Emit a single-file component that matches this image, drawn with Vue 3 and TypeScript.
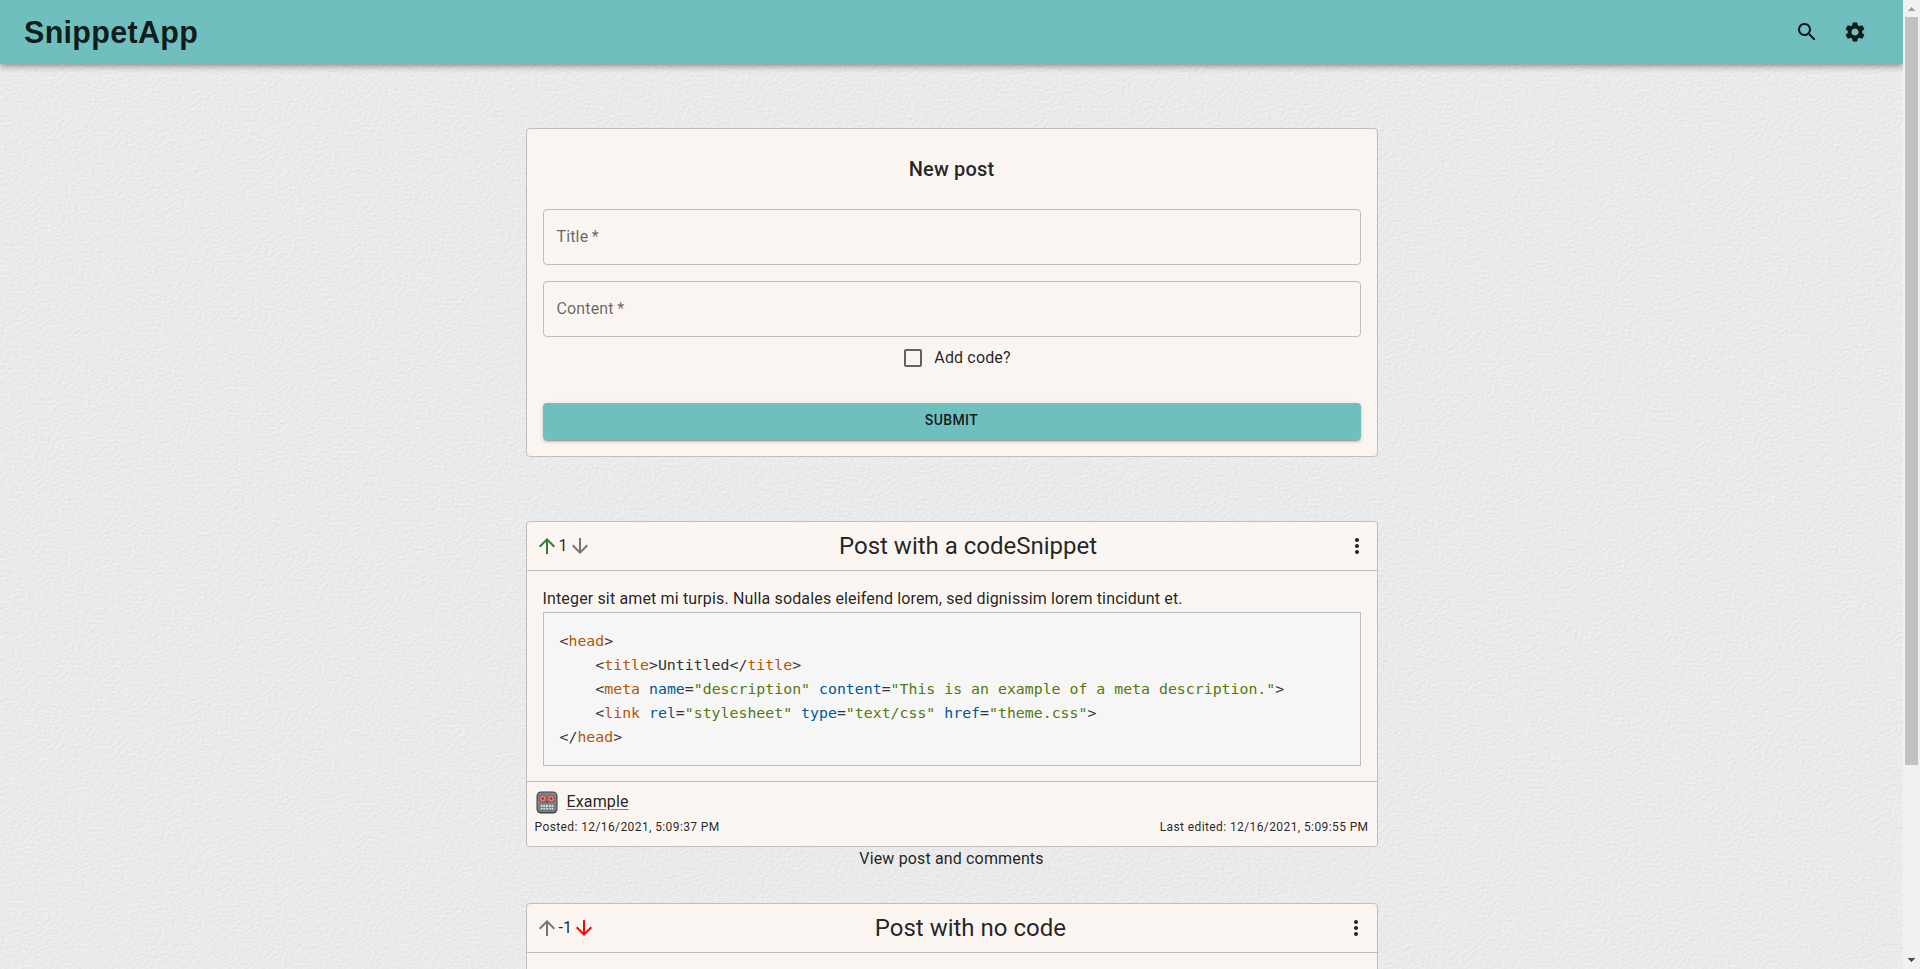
<script setup lang="ts">
interface Token {
  kind: 'plain' | 'tag' | 'attr' | 'str'
  text: string
}

interface Post {
  id: number
  votes: number
  title: string
  body?: string
  code?: Token[][]
  author?: string
  posted?: string
  edited?: string
}

const p = (text: string): Token => ({ kind: 'plain', text })
const t = (text: string): Token => ({ kind: 'tag', text })
const a = (text: string): Token => ({ kind: 'attr', text })
const s = (text: string): Token => ({ kind: 'str', text })

const fields: string[] = ['Title', 'Content']

const posts: Post[] = [
  {
    id: 1,
    votes: 1,
    title: 'Post with a codeSnippet',
    body: 'Integer sit amet mi turpis. Nulla sodales eleifend lorem, sed dignissim lorem tincidunt et.',
    code: [
      [p('<'), t('head'), p('>')],
      [p('    <'), t('title'), p('>Untitled</'), t('title'), p('>')],
      [p('    <'), t('meta'), p(' '), a('name'), p('='), s('"description"'), p(' '), a('content'), p('='), s('"This is an example of a meta description."'), p('>')],
      [p('    <'), t('link'), p(' '), a('rel'), p('='), s('"stylesheet"'), p(' '), a('type'), p('='), s('"text/css"'), p(' '), a('href'), p('='), s('"theme.css"'), p('>')],
      [p('</'), t('head'), p('>')],
    ],
    author: 'Example',
    posted: '12/16/2021, 5:09:37 PM',
    edited: '12/16/2021, 5:09:55 PM',
  },
  { id: 2, votes: -1, title: 'Post with no code' },
]
</script>

<template>
  <div class="window">
    <div class="viewport">
      <svg class="paper" aria-hidden="true">
        <filter id="grain" x="0" y="0" width="100%" height="100%" color-interpolation-filters="sRGB">
          <feTurbulence type="fractalNoise" baseFrequency="0.3 0.42" numOctaves="3" seed="4" result="noise" />
          <feDiffuseLighting in="noise" lighting-color="#ffffff" surfaceScale="0.14" diffuseConstant="1.06">
            <feDistantLight azimuth="235" elevation="60" />
          </feDiffuseLighting>
        </filter>
        <rect width="100%" height="100%" filter="url(#grain)" />
      </svg>

      <header class="bar">
        <h1 class="brand">SnippetApp</h1>
        <nav class="actions">
          <svg class="icon" viewBox="0 0 24 24"><path d="M15.5 14h-.79l-.28-.27C15.41 12.59 16 11.11 16 9.5 16 5.91 13.09 3 9.5 3S3 5.91 3 9.5 5.91 16 9.5 16c1.61 0 3.09-.59 4.23-1.57l.27.28v.79l5 4.99L20.49 19l-4.99-5zm-6 0C7.01 14 5 11.99 5 9.5S7.01 5 9.5 5 14 7.01 14 9.5 11.99 14 9.5 14z" /></svg>
          <svg class="icon" viewBox="0 0 24 24"><path d="M19.14 12.94c.04-.3.06-.61.06-.94 0-.32-.02-.64-.07-.94l2.03-1.58c.18-.14.23-.41.12-.61l-1.92-3.32c-.12-.22-.37-.29-.59-.22l-2.39.96c-.5-.38-1.03-.7-1.62-.94l-.36-2.54c-.04-.24-.24-.41-.48-.41h-3.84c-.24 0-.43.17-.47.41l-.36 2.54c-.59.24-1.13.57-1.62.94l-2.39-.96c-.22-.08-.47 0-.59.22L2.74 8.87c-.12.21-.08.47.12.61l2.03 1.58c-.05.3-.09.63-.09.94s.02.64.07.94l-2.03 1.58c-.18.14-.23.41-.12.61l1.92 3.32c.12.22.37.29.59.22l2.39-.96c.5.38 1.03.7 1.62.94l.36 2.54c.05.24.24.41.48.41h3.84c.24 0 .44-.17.47-.41l.36-2.54c.59-.24 1.13-.56 1.62-.94l2.39.96c.22.08.47 0 .59-.22l1.92-3.32c.12-.22.07-.47-.12-.61l-2.01-1.58zM12 15.6c-1.98 0-3.6-1.62-3.6-3.6s1.62-3.6 3.6-3.6 3.6 1.62 3.6 3.6-1.62 3.6-3.6 3.6z" /></svg>
        </nav>
      </header>

      <main class="container">
        <form class="card form">
          <h2 class="form-title">New post</h2>
          <div v-for="f in fields" :key="f" class="field">{{ f }}&#8201;*</div>
          <label class="check">
            <span class="box-wrap">
              <svg class="icon" viewBox="0 0 24 24"><path d="M19 5v14H5V5h14m0-2H5c-1.1 0-2 .9-2 2v14c0 1.1.9 2 2 2h14c1.1 0 2-.9 2-2V5c0-1.1-.9-2-2-2z" /></svg>
            </span>
            <span>Add code?</span>
          </label>
          <button type="button" class="submit">SUBMIT</button>
        </form>

        <article v-for="post in posts" :key="post.id" class="post">
          <div class="card">
            <div class="post-head">
              <div class="votes">
                <svg class="icon arrow" :class="{ up: post.votes > 0 }" viewBox="0 0 24 24"><path d="m4 12 1.41 1.41L11 7.83V20h2V7.83l5.58 5.59L20 12l-8-8-8 8z" /></svg>
                <span>{{ post.votes }}</span>
                <svg class="icon arrow" :class="{ down: post.votes < 0 }" viewBox="0 0 24 24"><path d="m20 12-1.41-1.41L13 16.17V4h-2v12.17l-5.58-5.59L4 12l8 8 8-8z" /></svg>
              </div>
              <h2 class="post-title">{{ post.title }}</h2>
              <svg class="icon" viewBox="0 0 24 24"><path d="M12 8c1.1 0 2-.9 2-2s-.9-2-2-2-2 .9-2 2 .9 2 2 2zm0 2c-1.1 0-2 .9-2 2s.9 2 2 2 2-.9 2-2-.9-2-2-2zm0 6c-1.1 0-2 .9-2 2s.9 2 2 2 2-.9 2-2-.9-2-2-2z" /></svg>
            </div>
            <div class="post-body">
              <p v-if="post.body" class="text">{{ post.body }}</p>
              <div v-if="post.code" class="code">
                <div v-for="(line, i) in post.code" :key="i" class="line"><span v-for="(tok, j) in line" :key="j" :class="tok.kind">{{ tok.text }}</span></div>
              </div>
            </div>
            <div v-if="post.author" class="post-foot">
              <div class="author">
                <svg class="avatar" viewBox="0 0 22 23">
                  <rect x="0.5" y="0.5" width="21" height="22" rx="4.5" fill="#3e4347" />
                  <rect x="1.6" y="1.4" width="18.8" height="19.6" rx="3.4" fill="#83838f" />
                  <circle cx="6.8" cy="7.6" r="3.9" fill="#4a4a52" />
                  <circle cx="15.2" cy="7.6" r="3.9" fill="#4a4a52" />
                  <circle cx="6.8" cy="7.6" r="3.3" fill="#f07060" />
                  <circle cx="15.2" cy="7.6" r="3.3" fill="#f07060" />
                  <circle cx="6.8" cy="7.6" r="1.1" fill="#5c2f2d" />
                  <circle cx="15.2" cy="7.6" r="1.1" fill="#5c2f2d" />
                  <path d="M11 9.8l1.2 2.2H9.8z" fill="#3e4347" />
                  <rect x="3.8" y="13" width="14.4" height="6.4" rx="1" fill="#4a4d52" />
                  <path d="M4.4 13.6h2.3v2.3H4.4zM7.15 13.6h2.3v2.3h-2.3zM9.9 13.6h2.2v2.3H9.9zM12.6 13.6h2.3v2.3h-2.3zM15.35 13.6h2.3v2.3h-2.3zM4.4 16.5h2.3v2.3H4.4zM7.15 16.5h2.3v2.3h-2.3zM9.9 16.5h2.2v2.3H9.9zM12.6 16.5h2.3v2.3h-2.3zM15.35 16.5h2.3v2.3h-2.3z" fill="#d5d7d6" />
                </svg>
                <a class="name">{{ post.author }}</a>
              </div>
              <div class="dates">
                <span>Posted: {{ post.posted }}</span>
                <span>Last edited: {{ post.edited }}</span>
              </div>
            </div>
          </div>
          <a v-if="post.author" class="view">View post and comments</a>
        </article>
      </main>
    </div>

    <aside class="scrollbar">
      <svg class="cap" viewBox="0 0 17 17"><path d="M5 11h7v-1h-1v-1h-1v-1H9V7H8v1H7v1H6v1H5z" fill="#a3a3a3" /></svg>
      <div class="thumb"></div>
      <svg class="cap end" viewBox="0 0 17 17"><path d="M5 6h7v1h-1v1h-1v1H9v1H8V9H7V8H6V7H5z" fill="#505050" /></svg>
    </aside>
  </div>
</template>

<style>
html,
body {
  margin: 0;
  overflow: hidden;
}
</style>

<style scoped>
.window {
  display: flex;
  height: 100vh;
  overflow: hidden;
  background: #e9e9e9;
  color: rgba(0, 0, 0, 0.87);
  font: 400 16px/24px Roboto, sans-serif;
  letter-spacing: 0.15px;
}
.viewport {
  position: relative;
  flex: 1;
  min-width: 0;
  height: 100%;
  overflow: hidden;
}
.paper {
  position: absolute;
  inset: 0;
  width: 100%;
  height: 100%;
}
.icon {
  display: block;
  width: 24px;
  height: 24px;
  flex: none;
  fill: currentColor;
}
.bar {
  position: relative;
  display: flex;
  align-items: center;
  justify-content: space-between;
  height: 64px;
  padding: 0 36px 0 24px;
  box-sizing: border-box;
  background: #70bfbf;
  box-shadow: 0 2px 4px -1px rgba(0, 0, 0, 0.2), 0 4px 5px 0 rgba(0, 0, 0, 0.14), 0 1px 10px 0 rgba(0, 0, 0, 0.12);
}
.brand {
  margin: 0;
  padding-bottom: 1px;
  font: 700 30.5px/40px "Liberation Sans", Arial, sans-serif;
  letter-spacing: 0.3px;
}
.actions {
  display: flex;
  gap: 24px;
}
.container {
  position: relative;
  width: 852px;
  margin: 64px auto 0;
}
.card {
  border: 1px solid #c0bdba;
  border-radius: 4px;
  background: #faf5f1;
}
.form {
  height: 329px;
  box-sizing: border-box;
  margin-bottom: 64px;
  padding: 0 16px;
}
.form-title {
  margin: 24px 0;
  font-size: 20px;
  font-weight: 500;
  line-height: 32px;
  text-align: center;
}
.field {
  height: 56px;
  margin-bottom: 16px;
  padding: 0 13px;
  box-sizing: border-box;
  border: 1px solid #c0bdba;
  border-radius: 4px;
  line-height: 54px;
  color: rgba(0, 0, 0, 0.6);
}
.check {
  display: flex;
  align-items: center;
  justify-content: center;
  height: 42px;
  margin: -16px 0 24px;
}
.box-wrap {
  padding: 9px;
  color: rgba(0, 0, 0, 0.6);
}
.submit {
  display: block;
  width: 100%;
  height: 37px;
  padding: 0 0 3px;
  border: 0;
  border-radius: 4px;
  background: #70bfbf;
  color: rgba(0, 0, 0, 0.87);
  font: 500 14px/24px Roboto, sans-serif;
  letter-spacing: 0.4px;
  box-shadow: 0 3px 1px -2px rgba(0, 0, 0, 0.2), 0 2px 2px 0 rgba(0, 0, 0, 0.14), 0 1px 5px 0 rgba(0, 0, 0, 0.12);
}
.post {
  display: flex;
  flex-direction: column;
  margin-bottom: 32px;
}
.post-head {
  display: flex;
  align-items: center;
  justify-content: space-between;
  height: 48px;
  padding: 0 8px;
  border-bottom: 1px solid #c0bdba;
}
.votes {
  display: flex;
  align-items: center;
}
.arrow {
  color: #757575;
}
.up {
  color: #2e7d32;
}
.down {
  color: #ff0000;
}
.post-title {
  margin: 0;
  font-size: 24px;
  font-weight: 400;
  line-height: 32px;
  letter-spacing: 0;
}
.post-body {
  min-height: 60px;
  padding: 16px 16px 15px;
}
.text {
  margin: 0 0 1px;
}
.code {
  padding: 16px;
  border: 1px solid #c0bdba;
  background: #f6f6f6;
  color: #333;
  font: 14.86px/24px "DejaVu Sans Mono", monospace;
  letter-spacing: 0;
}
.line {
  height: 24px;
  white-space: pre;
}
.tag {
  color: #b75501;
}
.attr {
  color: #015692;
}
.str {
  color: #54790d;
}
.post-foot {
  height: 65px;
  padding: 8px;
  box-sizing: border-box;
  border-top: 1px solid #c0bdba;
}
.author {
  display: flex;
  align-items: center;
  gap: 9px;
  height: 24px;
  padding-left: 1px;
}
.avatar {
  display: block;
  width: 22px;
  height: 23px;
}
.name {
  text-decoration: underline;
  text-decoration-color: rgba(0, 0, 0, 0.5);
  text-underline-offset: 2px;
}
.dates {
  display: flex;
  justify-content: space-between;
  margin-top: 3px;
  font-size: 12px;
  line-height: 20px;
  letter-spacing: 0.4px;
}
.view {
  align-self: center;
}
.scrollbar {
  display: flex;
  flex-direction: column;
  align-items: center;
  width: 17px;
  background: #f1f1f1;
}
.cap {
  display: block;
  width: 17px;
  height: 17px;
}
.thumb {
  width: 13px;
  height: 748px;
  background: #c1c1c1;
}
.end {
  margin-top: auto;
}
</style>
